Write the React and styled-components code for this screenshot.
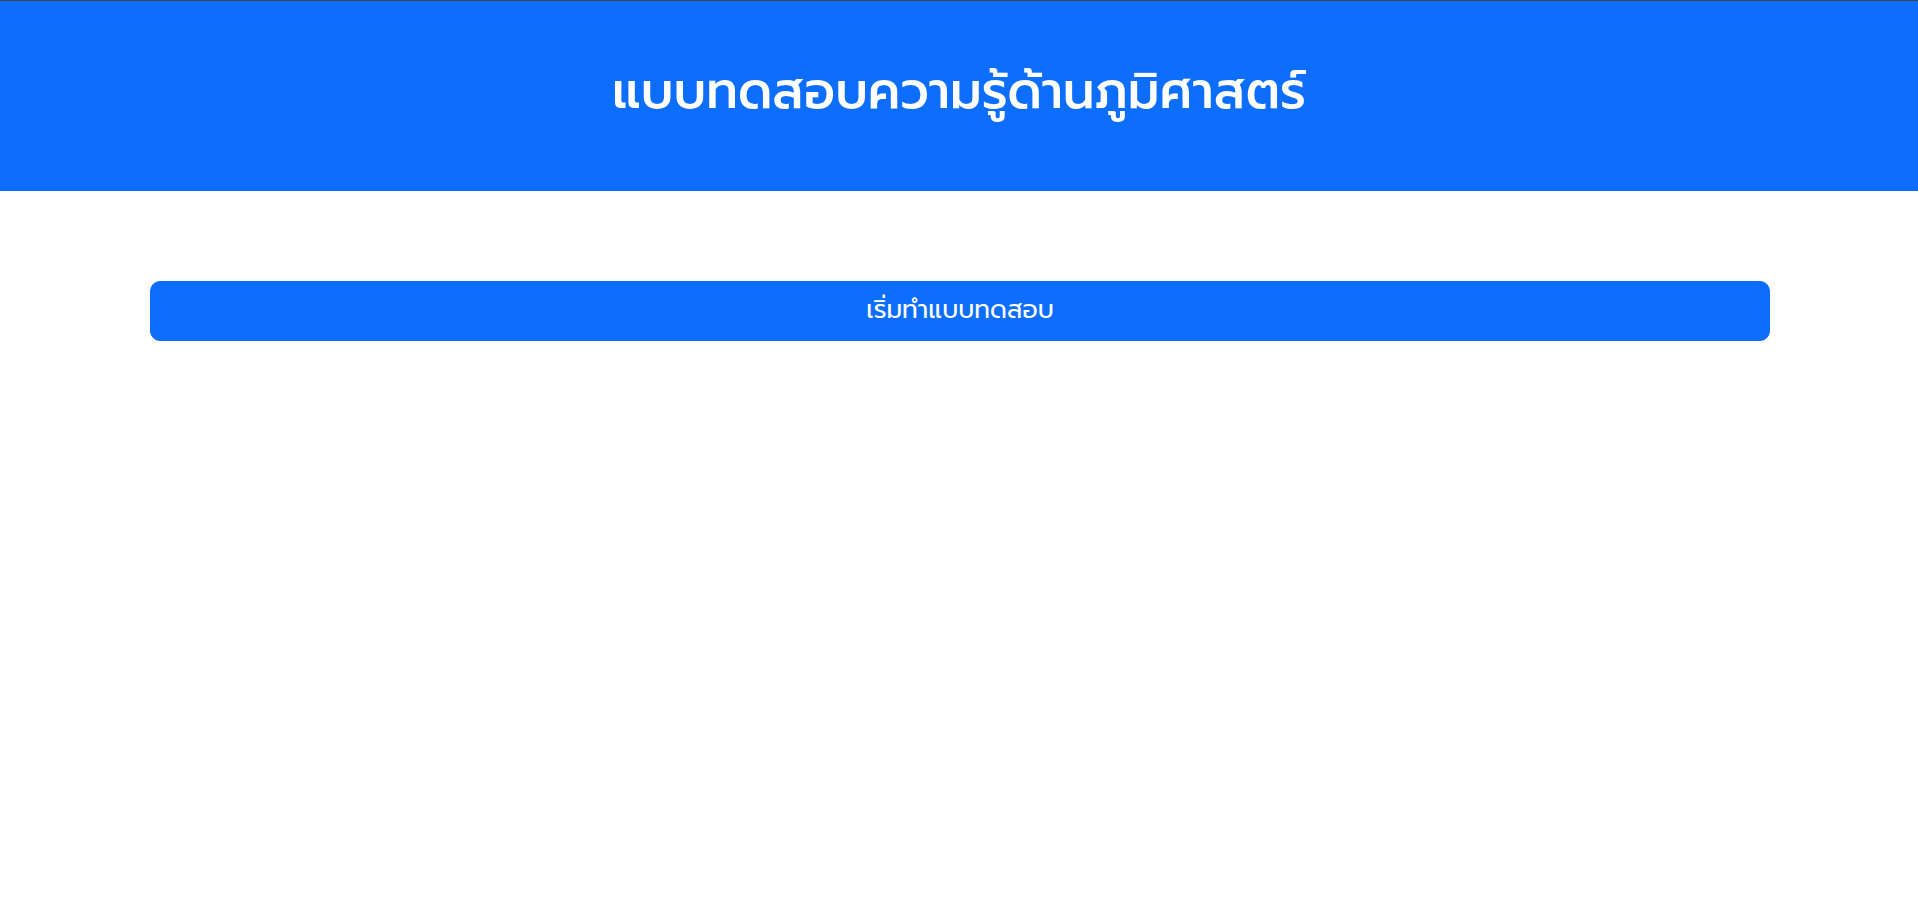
import React from "react";
import styled, { createGlobalStyle } from "styled-components";

const GlobalStyle = createGlobalStyle`
  *, *::before, *::after { box-sizing: border-box; }
  body {
    margin: 0;
    background: #fff;
    font-family: "Prompt", "Kanit", "Noto Sans Thai", "Noto Sans", sans-serif;
  }
`;

const Header = styled.header`
  padding: 59px 48px 69px;
  background: #0d6efd;
  border-top: 1px solid #444;
  color: #fff;
  text-align: center;
`;

const Title = styled.h1`
  margin: 0;
  font-size: 50px;
  line-height: 62px;
  font-weight: 500;
`;

const Container = styled.main`
  margin: 90px 148px 0 150px;
  display: grid;
`;

const StartButton = styled.button`
  padding: 7px 16px 9px;
  border: 1px solid #0d6efd;
  border-radius: 10px;
  background: #0d6efd;
  color: #fff;
  font-family: inherit;
  font-size: 25px;
  line-height: 42px;
  cursor: pointer;
`;

export default function App() {
  return (
    <>
      <GlobalStyle />
      <Header>
        <Title>แบบทดสอบความรู้ด้านภูมิศาสตร์</Title>
      </Header>
      <Container>
        <StartButton type="button">เริ่มทำแบบทดสอบ</StartButton>
      </Container>
    </>
  );
}
